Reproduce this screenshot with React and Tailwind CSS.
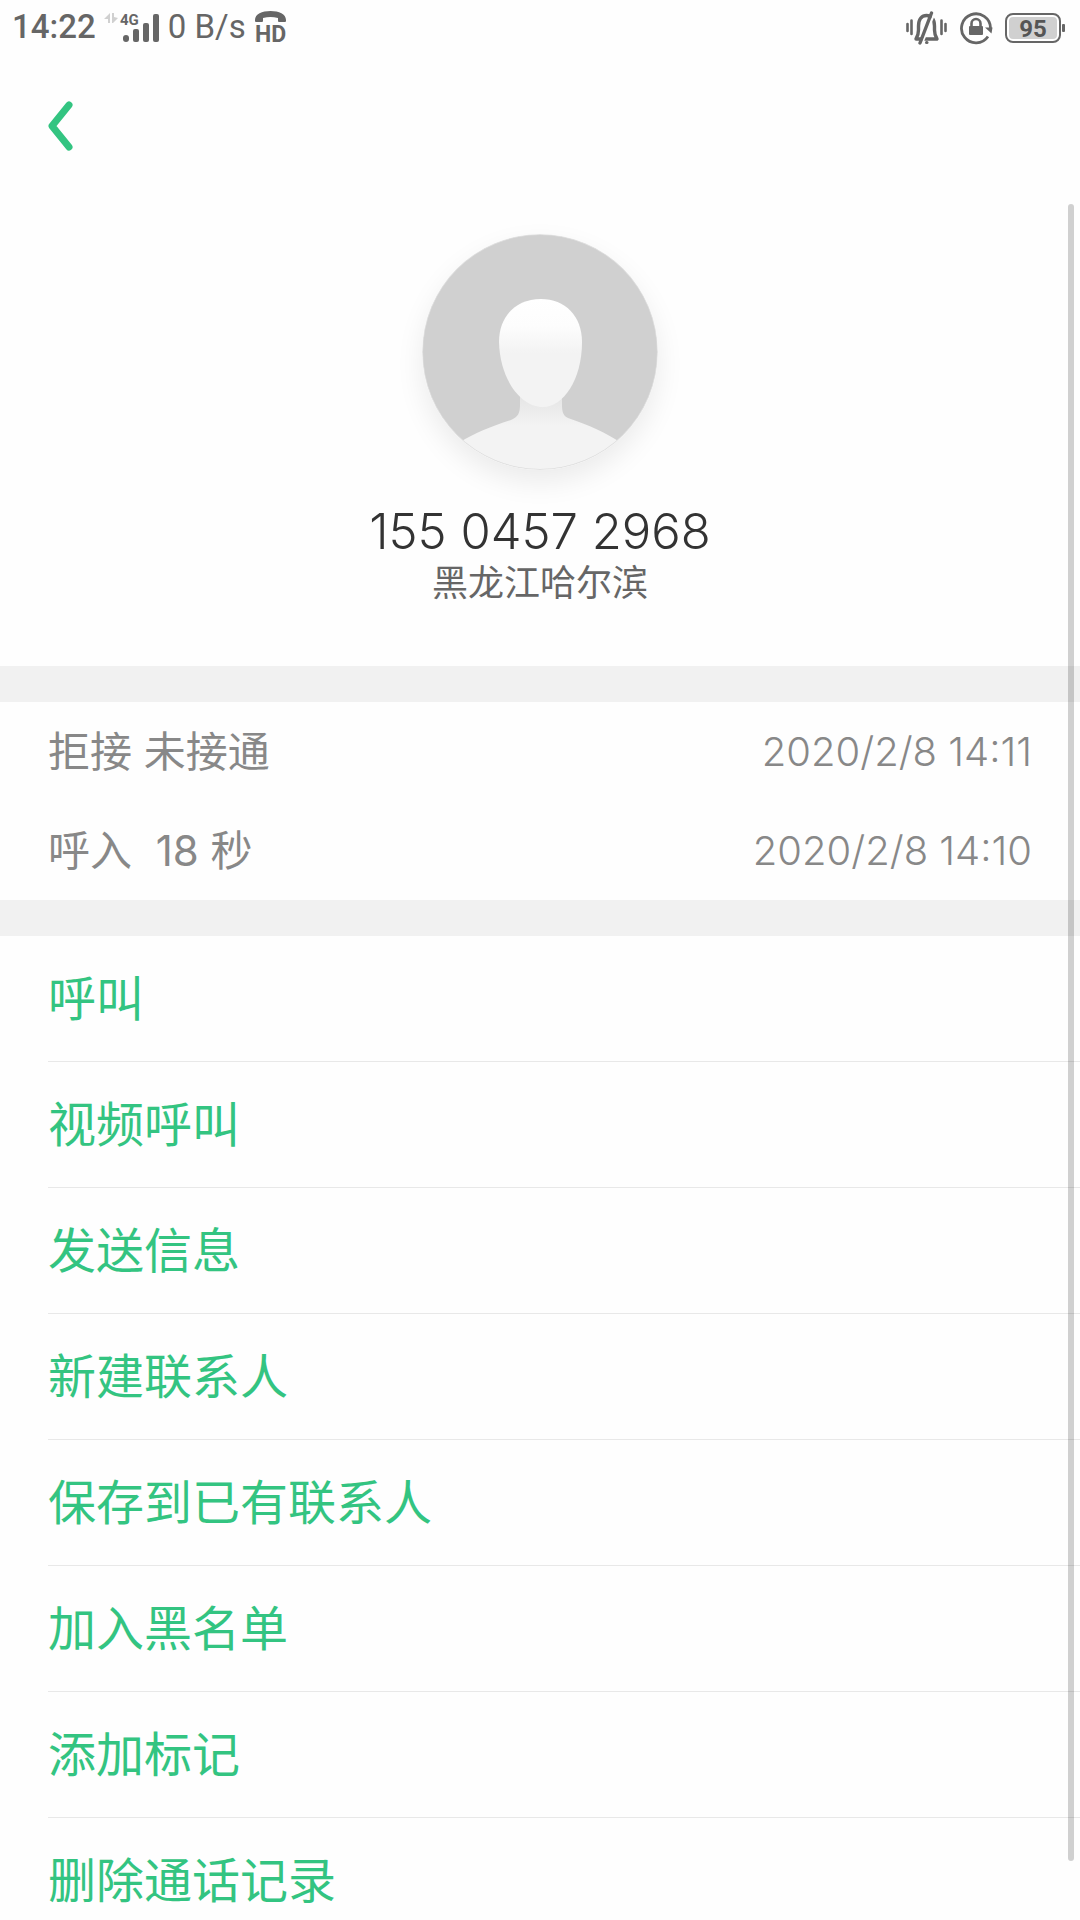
import { useId } from "react";

const callLog = [
  { id: 1, label: "拒接 未接通", time: "2020/2/8 14:11" },
  { id: 2, label: "呼入  18 秒", time: "2020/2/8 14:10" }
];

const actions = [
  "呼叫",
  "视频呼叫",
  "发送信息",
  "新建联系人",
  "保存到已有联系人",
  "加入黑名单",
  "添加标记",
  "删除通话记录"
];

function SignalIcon() {
  return (
    <svg width="56" height="36" viewBox="103 8 56 36" className="shrink-0" aria-label="4G">
      <path d="M103 18 109 12V22H107V18ZM111 12H113V16L117 17 112 22H111Z" fill="#d0d0d0" />
      <text x="119" y="24" fontSize="15" fontWeight="700" fill="#666">4G</text>
      <rect x="122" y="34" width="6" height="7" rx="3" fill="#666" />
      <rect x="132" y="28" width="6" height="13" rx="2" fill="#666" />
      <rect x="142" y="22" width="6" height="19" rx="2" fill="#666" />
      <rect x="152" y="13" width="6" height="28" rx="2" fill="#666" />
    </svg>
  );
}

function HdCallIcon() {
  return (
    <svg width="36" height="40" viewBox="256 7 36 40" className="shrink-0" aria-label="HD">
      <path
        d="M257 20C257 14 264 11 272.500 11S288 14 288 20V21Q288 22 287 22H281Q280 22 280 21V18Q276 17 272.500 17T265 18V21Q265 22 264 22H258Q257 22 257 21Z"
        fill="#666"
      />
      <text x="257" y="42" fontSize="23" fontWeight="700" fill="#666">HD</text>
    </svg>
  );
}

function VibrateIcon() {
  return (
    <svg width="42" height="36" viewBox="906 8 42 36" fill="none" stroke="#666" strokeLinecap="round" className="shrink-0">
      <path d="M908.500 23V30M912.500 19.500V33M942.500 19.500V33M946.500 23V30" strokeWidth="2.600" />
      <path d="M917 38Q919.500 34 919.500 29V25C919.500 18 923 14.500 927.500 14.500S935.500 18 935.500 25V29Q935.500 34 938 38Z" strokeWidth="3.400" strokeLinejoin="round" />
      <path d="M935 13.500 924 40" stroke="#fefefe" strokeWidth="2.200" strokeLinecap="butt" />
      <path d="M932.500 12 921 42" strokeWidth="3.400" />
      <path d="M927.500 41.500H928" strokeWidth="3" />
    </svg>
  );
}

function RotationLockIcon() {
  return (
    <svg width="34" height="36" viewBox="959 8 34 36" fill="none" stroke="#666" className="shrink-0">
      <path d="M988 35.500A14.500 14.500 0 1 1 990.500 27" strokeWidth="2.800" />
      <path d="M985 26.500H992.500L991.500 32.500Z" fill="#666" stroke="none" />
      <path d="M971.500 27V22.500A4.500 4.500 0 0 1 980.500 22.500V27" strokeWidth="2.600" />
      <rect x="969" y="25" width="14" height="9" rx="1" fill="#666" stroke="none" />
    </svg>
  );
}

function BatteryIcon() {
  return (
    <svg width="61" height="36" viewBox="1005 8 61 36" className="shrink-0" aria-label="95%">
      <rect x="1006" y="13" width="54" height="28" rx="7" fill="#fff" stroke="#666" strokeWidth="2" />
      <rect x="1009" y="16" width="48" height="22" rx="4" fill="#d0d0d0" />
      <rect x="1062" y="23" width="3" height="8" rx="1" fill="#666" />
      <text x="1033" y="36" fontSize="24" fontWeight="700" fill="#555" textAnchor="middle">95</text>
    </svg>
  );
}

function Avatar() {
  const id = useId();

  return (
    <svg viewBox="0 0 236 236" className="size-[236px] rounded-full shadow-[0_12px_28px_rgba(0,0,0,0.08)]" aria-hidden="true">
      <defs>
        <clipPath id={`${id}-clip`}>
          <circle cx="118" cy="118" r="117" />
        </clipPath>
        <linearGradient id={`${id}-face`} x1="0" y1="0" x2="0" y2="1">
          <stop offset="0" stopColor="#fff" />
          <stop offset="0.250" stopColor="#fdfdfd" />
          <stop offset="0.500" stopColor="#f3f3f3" />
        </linearGradient>
        <linearGradient id={`${id}-body`} x1="0" y1="0" x2="0" y2="1">
          <stop offset="0" stopColor="#e4e4e4" />
          <stop offset="0.400" stopColor="#f3f3f3" />
        </linearGradient>
      </defs>
      <circle cx="118" cy="118" r="118" fill="#e2e2e2" />
      <g clipPath={`url(#${id}-clip)`}>
        <rect width="236" height="236" fill="#d0d0d0" />
        <path
          d="M98 160V171C98 179 96 183 89 186C70 192 53 199 38 208V240H198V208C184 199 167 191 146 184C141 182 140 177 140 171V160Z"
          fill={`url(#${id}-body)`}
        />
        <path
          d="M119 65C143 65 160 82 160 108C160 146 141 173 121 173C99 173 78 146 77 108C77 82 94 65 119 65Z"
          fill={`url(#${id}-face)`}
        />
      </g>
    </svg>
  );
}

function StatusBar() {
  return (
    <div className="flex h-[54px] shrink-0 items-center justify-between pr-[14px] pl-3 font-['Roboto',sans-serif] text-[33px] leading-[54px] text-[#666]">
      <div className="flex items-center">
        <span className="font-medium">14:22</span>
        <span className="mr-2 ml-2 flex">
          <SignalIcon />
        </span>
        <span className="mr-2">0 B/s</span>
        <HdCallIcon />
      </div>
      <div className="flex items-center gap-3">
        <VibrateIcon />
        <RotationLockIcon />
        <BatteryIcon />
      </div>
    </div>
  );
}

export default function App() {
  return (
    <div className="relative flex h-screen flex-col overflow-hidden bg-[#fefefe] font-['Inter','Noto_Sans_CJK_SC',sans-serif]">
      <StatusBar />

      <header className="flex h-36 shrink-0 items-center px-12">
        <button type="button" aria-label="返回">
          <svg width="26" height="50" viewBox="0 0 26 50" fill="none" stroke="#33c481" strokeWidth="7" strokeLinecap="round" strokeLinejoin="round">
            <path d="M21 4 4 25 21 46" />
          </svg>
        </button>
      </header>

      <main className="min-h-0 flex-1 overflow-y-auto [scrollbar-width:none]">
        <section className="flex flex-col items-center pt-9 pb-[62px]">
          <Avatar />
          <h1 className="mt-8 text-[49px] leading-[60px] font-light text-[#333]">155 0457 2968</h1>
          <p className="text-[36px] leading-[42px] text-[#666]">黑龙江哈尔滨</p>
        </section>

        <ul className="border-y-36 border-[#f1f1f1] text-[#888]">
          {callLog.map((call) => (
            <li key={call.id} className="flex h-[99px] items-center justify-between px-12">
              <span className="text-[42px] whitespace-pre">{call.label}</span>
              <time className="text-[40px] font-light">{call.time}</time>
            </li>
          ))}
        </ul>

        <ul className="pl-12">
          {actions.map((action) => (
            <li key={action} className="border-b border-[#e8e8e8]">
              <button type="button" className="flex h-[125px] w-full items-center text-[48px] text-[#33c481]">
                {action}
              </button>
            </li>
          ))}
        </ul>
      </main>

      <div className="absolute top-[204px] right-[6px] bottom-[59px] w-[6px] rounded-full bg-black/18" />
    </div>
  );
}
